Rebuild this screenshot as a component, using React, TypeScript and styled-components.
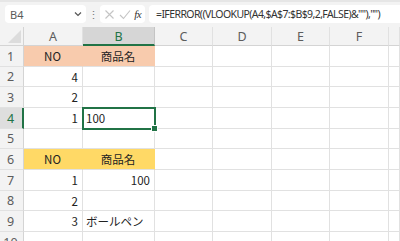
import React from 'react';
import styled, { createGlobalStyle } from 'styled-components';

const GREEN = '#217346';
const GRID = '#e1e1e1';

const GlobalStyle = createGlobalStyle`
  html, body {
    margin: 0;
    padding: 0;
    background: #ffffff;
    overflow: hidden;
  }
  body {
    font-family: "Noto Sans", "Noto Sans CJK JP", sans-serif;
  }
`;

// the last column is only a sliver at the right edge, its letter is off-screen
const columns = ['A', 'B', 'C', 'D', 'E', 'F', 'G'];
const colWidths = [59, 72, 58, 59, 58, 59];

type CellData = {
  text?: string;
  align?: 'left' | 'right' | 'center';
  fill?: string;
  selected?: boolean;
};

const ORANGE = '#f8cbad';
const GOLD = '#ffd966';

const rows: CellData[][] = [
  [{ text: 'NO', align: 'center', fill: ORANGE }, { text: '商品名', align: 'center', fill: ORANGE }],
  [{ text: '4', align: 'right' }, {}],
  [{ text: '2', align: 'right' }, {}],
  [{ text: '1', align: 'right' }, { text: '100', align: 'left', selected: true }],
  [{}, {}],
  [{ text: 'NO', align: 'center', fill: GOLD }, { text: '商品名', align: 'center', fill: GOLD }],
  [{ text: '1', align: 'right' }, { text: '100', align: 'right' }],
  [{ text: '2', align: 'right' }, {}],
  [{ text: '3', align: 'right' }, { text: 'ボールペン', align: 'left' }],
  [{}, {}],
];

// rows are ~20.67px tall in the capture
const rowHeights = rows.map((_, i) => Math.round((i + 1) * 20.67) - Math.round(i * 20.67));

const Page = styled.div`
  width: 400px;
  height: 241px;
  display: flex;
  flex-direction: column;
  overflow: hidden;
`;

const FormulaBar = styled.div`
  height: 29px;
  box-sizing: border-box;
  background: #f3f3f3;
  border-top: 2px solid #e6e6e6;
  display: flex;
  align-items: center;
  padding: 3px 0 4px 5px;
`;

const NameBox = styled.div`
  width: 81px;
  height: 18px;
  box-sizing: border-box;
  background: #fff;
  border-radius: 4px;
  display: flex;
  align-items: center;
  justify-content: space-between;
  padding: 0 4px 0 5px;
  font-family: "Noto Sans", sans-serif;
  font-size: 11px;
  color: #5a5a5a;
`;

const Grip = styled.div`
  width: 14px;
  display: flex;
  justify-content: center;
  color: #777;
  font-size: 11px;
  line-height: 1;
`;

const ActionBox = styled.div`
  width: 45px;
  height: 18px;
  box-sizing: border-box;
  background: #fff;
  border-radius: 4px;
  display: flex;
  align-items: center;
  justify-content: space-around;
  padding: 0 2px;
  margin-right: 4px;
`;

const FxLabel = styled.span`
  font-family: "Liberation Serif", serif;
  font-style: italic;
  font-size: 11px;
  color: #333;
  letter-spacing: -0.5px;
`;

const FormulaInput = styled.div`
  flex: 1;
  height: 18px;
  box-sizing: border-box;
  background: #fff;
  border-radius: 4px 0 0 4px;
  display: flex;
  align-items: center;
  padding-left: 7px;
  font-family: "Noto Sans", sans-serif;
  font-size: 10.5px;
  letter-spacing: -0.6px;
  color: #333;
  white-space: nowrap;
  overflow: hidden;
`;

const Sheet = styled.div`
  flex: 1;
  display: grid;
  grid-template-columns: 24px ${colWidths.map((w) => `${w}px`).join(' ')} 1fr;
  grid-template-rows: 19px ${rowHeights.map((h) => `${h}px`).join(' ')};
`;

const Corner = styled.div`
  background: #f3f3f3;
  border-right: 1px solid #d4d4d4;
  border-bottom: 1px solid #d4d4d4;
  box-sizing: border-box;
  position: relative;
  overflow: hidden;
  &::after {
    content: '';
    position: absolute;
    right: 2px;
    bottom: 2px;
    width: 0;
    height: 0;
    border-left: 13px solid transparent;
    border-bottom: 13px solid #dcdcdc;
  }
`;

const ColHeader = styled.div<{ $active?: boolean }>`
  box-sizing: border-box;
  background: ${({ $active }) => ($active ? '#d6d6d6' : '#f3f3f3')};
  border-right: 1px solid ${({ $active }) => ($active ? '#c4c4c4' : GRID)};
  border-bottom: ${({ $active }) => ($active ? `2px solid ${GREEN}` : '1px solid #d4d4d4')};
  display: flex;
  align-items: center;
  justify-content: center;
  font-family: "Noto Sans", sans-serif;
  font-size: 12.5px;
  color: ${({ $active }) => ($active ? GREEN : '#5c5c5c')};
  padding-top: ${({ $active }) => ($active ? '1px' : '0')};
`;

const RowHeader = styled.div<{ $active?: boolean }>`
  box-sizing: border-box;
  background: ${({ $active }) => ($active ? '#dedede' : '#f3f3f3')};
  border-right: ${({ $active }) => ($active ? `2px solid ${GREEN}` : '1px solid #d4d4d4')};
  border-bottom: 1px solid ${GRID};
  display: flex;
  align-items: center;
  justify-content: center;
  padding-right: ${({ $active }) => ($active ? '1px' : '2px')};
  font-family: "Noto Sans", sans-serif;
  font-size: 12.5px;
  color: ${({ $active }) => ($active ? GREEN : '#5c5c5c')};
`;

const Cell = styled.div<{ $align?: string; $fill?: string; $selected?: boolean }>`
  box-sizing: border-box;
  position: relative;
  background: ${({ $fill }) => $fill ?? '#fff'};
  border-right: 1px solid ${({ $fill }) => ($fill ? $fill : GRID)};
  border-bottom: 1px solid ${GRID};
  display: flex;
  align-items: center;
  justify-content: ${({ $align }) =>
    $align === 'right' ? 'flex-end' : $align === 'center' ? 'center' : 'flex-start'};
  padding: 0 4px 0 3px;
  font-family: "Noto Sans CJK JP", sans-serif;
  font-size: 11.5px;
  color: #222;
  white-space: nowrap;
  ${({ $selected }) =>
    $selected &&
    `
    outline: 2px solid ${GREEN};
    outline-offset: -1px;
    z-index: 2;
    &::after {
      content: '';
      position: absolute;
      right: -4px;
      bottom: -4px;
      width: 5px;
      height: 5px;
      background: ${GREEN};
      border: 1px solid #fff;
    }
  `}
`;

const Chevron = () => (
  <svg width="8" height="6" viewBox="0 0 8 6">
    <path d="M1 1.5 L4 4.5 L7 1.5" fill="none" stroke="#555" strokeWidth="1.2" />
  </svg>
);

const CancelIcon = () => (
  <svg width="11" height="11" viewBox="0 0 11 11">
    <path d="M1.5 1.5 L9.5 9.5 M9.5 1.5 L1.5 9.5" stroke="#c4c4c4" strokeWidth="1.1" />
  </svg>
);

const EnterIcon = () => (
  <svg width="12" height="11" viewBox="0 0 12 11">
    <path d="M1 6 L4.5 9.5 L11 1.5" fill="none" stroke="#c4c4c4" strokeWidth="1.1" />
  </svg>
);

export default function App() {
  return (
    <Page>
      <GlobalStyle />
      <FormulaBar>
        <NameBox>
          <span>B4</span>
          <Chevron />
        </NameBox>
        <Grip>⋮</Grip>
        <ActionBox>
          <CancelIcon />
          <EnterIcon />
          <FxLabel>fx</FxLabel>
        </ActionBox>
        <FormulaInput>=IFERROR((VLOOKUP(A4,$A$7:$B$9,2,FALSE)&""),"")</FormulaInput>
      </FormulaBar>
      <Sheet>
        <Corner />
        {columns.map((c) => (
          <ColHeader key={c} $active={c === 'B'}>
            {c === 'G' ? null : c}
          </ColHeader>
        ))}
        {rows.map((row, r) => (
          <React.Fragment key={r}>
            <RowHeader $active={r === 3}>{r + 1}</RowHeader>
            {columns.map((c, ci) => {
              const cell = row[ci] ?? {};
              return (
                <Cell key={c} $align={cell.align} $fill={cell.fill} $selected={cell.selected}>
                  {cell.text}
                </Cell>
              );
            })}
          </React.Fragment>
        ))}
      </Sheet>
    </Page>
  );
}
